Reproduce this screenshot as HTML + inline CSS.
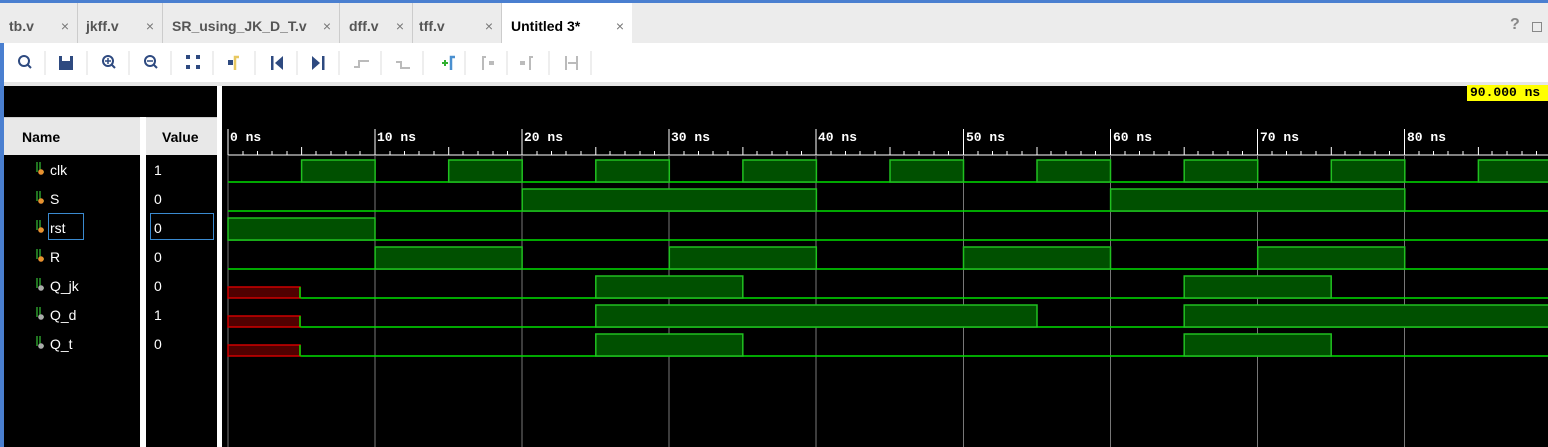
<!DOCTYPE html>
<html><head><style>
body{margin:0;width:1548px;height:447px;overflow:hidden;background:#000;font-family:"Liberation Sans",sans-serif;position:relative}
.a{position:absolute}
.tab{position:absolute;top:3px;height:40px;line-height:46px;font-size:14px;color:#555;font-weight:bold;border-right:1px solid #ccc;box-sizing:border-box;padding-left:9px}
.tab i{position:absolute;right:8px;font-style:normal;font-weight:normal;color:#777;font-size:14px}
.sig{position:absolute;left:36px;color:#fff;font-size:14px}
.val{position:absolute;left:154px;color:#fff;font-size:14px}
</style></head><body>
<div class="a" style="left:0;top:0;width:1548px;height:3px;background:#4a7fd0"></div>
<div class="a" style="left:0;top:3px;width:1548px;height:40px;background:#ececec"></div>
<div class="tab" style="left:0;width:78px">tb.v<i>×</i></div>
<div class="tab" style="left:78px;width:85px;padding-left:8px">jkff.v<i>×</i></div>
<div class="tab" style="left:163px;width:177px">SR_using_JK_D_T.v<i>×</i></div>
<div class="tab" style="left:340px;width:73px">dff.v<i>×</i></div>
<div class="tab" style="left:413px;width:89px;padding-left:6px">tff.v<i>×</i></div>
<div class="tab" style="left:502px;width:130px;background:#fff;color:#000;border:none">Untitled 3*<i>×</i></div>
<div class="a" style="left:1510px;top:16px;color:#888;font-weight:bold;font-size:16px">?</div>
<div class="a" style="left:1532px;top:22px;width:8px;height:8px;border:1.5px solid #888"></div>
<div class="a" style="left:0;top:43px;width:1548px;height:39px;background:#fff"></div>
<div class="a" style="left:0;top:82px;width:1548px;height:4px;background:#e6e6e6"></div>
<svg class="a" style="left:0;top:43px" width="1548" height="39">
<g stroke="#ddd"><line x1="45" y1="8" x2="45" y2="32"/><line x1="87" y1="8" x2="87" y2="32"/><line x1="129" y1="8" x2="129" y2="32"/><line x1="171" y1="8" x2="171" y2="32"/><line x1="213" y1="8" x2="213" y2="32"/><line x1="255" y1="8" x2="255" y2="32"/><line x1="297" y1="8" x2="297" y2="32"/><line x1="339" y1="8" x2="339" y2="32"/><line x1="381" y1="8" x2="381" y2="32"/><line x1="423" y1="8" x2="423" y2="32"/><line x1="465" y1="8" x2="465" y2="32"/><line x1="507" y1="8" x2="507" y2="32"/><line x1="549" y1="8" x2="549" y2="32"/><line x1="591" y1="8" x2="591" y2="32"/></g>
<g fill="none" stroke="#2e4a80" stroke-width="2"><circle cx="24" cy="18" r="5"/><line x1="28" y1="22" x2="31" y2="25"/><circle cx="108" cy="18" r="5"/><line x1="112" y1="22" x2="115" y2="25"/><circle cx="150" cy="18" r="5"/><line x1="154" y1="22" x2="157" y2="25"/><line x1="105" y1="18" x2="111" y2="18" stroke-width="1.5"/><line x1="108" y1="15" x2="108" y2="21" stroke-width="1.5"/><line x1="147" y1="18" x2="153" y2="18" stroke-width="1.5"/></g>
<rect x="59" y="13" width="14" height="14" fill="#2e4a80"/><rect x="62" y="13" width="8" height="5" fill="#fff"/>
<g fill="#2e4a80"><rect x="186" y="12" width="4" height="4"/><rect x="196" y="12" width="4" height="4"/><rect x="186" y="22" width="4" height="4"/><rect x="196" y="22" width="4" height="4"/><rect x="271" y="13" width="2.5" height="14"/><polygon points="283,13 283,27 275,20"/><rect x="322" y="13" width="2.5" height="14"/><polygon points="312,13 312,27 320,20"/></g>
<rect x="228" y="17" width="5" height="5" fill="#2e4a80"/><path d="M235 27V14h4" stroke="#e8c860" stroke-width="2.5" fill="none"/>
<g stroke="#bbb" stroke-width="2" fill="none"><path d="M354 24h5v-6h10"/><path d="M396 19h5v6h9"/><path d="M483 27V14h3"/><path d="M530 27V14h3"/><path d="M566 13v14M577 13v14M568 20h8"/></g>
<path d="M442 20h6M445 17v6" stroke="#30b030" stroke-width="2"/><path d="M451 27V14h4" stroke="#4a90d0" stroke-width="2.5" fill="none"/>
<rect x="489" y="18" width="5" height="4" fill="#bbb"/><rect x="520" y="18" width="5" height="4" fill="#bbb"/>
</svg>
<div class="a" style="left:0;top:43px;width:4px;height:404px;background:#4a7fd0"></div>
<div class="a" style="left:140px;top:117px;width:6px;height:330px;background:#fff"></div>
<div class="a" style="left:217px;top:86px;width:5px;height:361px;background:#fff"></div>
<div class="a" style="left:4px;top:117px;width:136px;height:37px;background:#e8e8e8;border-top:1px solid #ccc"></div>
<div class="a" style="left:146px;top:117px;width:71px;height:37px;background:#e8e8e8;border-top:1px solid #ccc"></div>
<div class="a" style="left:22px;top:129px;font-weight:bold;font-size:14px">Name</div>
<div class="a" style="left:162px;top:129px;font-weight:bold;font-size:14px">Value</div>
<svg class="a" style="left:0;top:155px" width="146" height="200">
<g stroke="#2a9a2a" stroke-width="1.5" fill="none"><path d="M37 7v10M40 7v10h4"/><path d="M37 7v10M40 7v10h4" transform="translate(0,29)"/><path d="M37 7v10M40 7v10h4" transform="translate(0,58)"/><path d="M37 7v10M40 7v10h4" transform="translate(0,87)"/><path d="M37 7v10M40 7v10h4" transform="translate(0,116)"/><path d="M37 7v10M40 7v10h4" transform="translate(0,145)"/><path d="M37 7v10M40 7v10h4" transform="translate(0,174)"/></g>
<g fill="#e89030"><circle cx="41" cy="17" r="2.8"/><circle cx="41" cy="46" r="2.8"/><circle cx="41" cy="75" r="2.8"/><circle cx="41" cy="104" r="2.8"/></g>
<g fill="#aaa"><circle cx="41" cy="133" r="2.8"/><circle cx="41" cy="162" r="2.8"/><circle cx="41" cy="191" r="2.8"/></g>
</svg>
<div class="sig" style="left:50px;top:162px">clk</div><div class="val" style="top:162px">1</div>
<div class="sig" style="left:50px;top:191px">S</div><div class="val" style="top:191px">0</div>
<div class="a" style="left:48px;top:213px;width:36px;height:27px;border:1px solid #3a8ad0;box-sizing:border-box"></div>
<div class="sig" style="left:50px;top:220px">rst</div>
<div class="a" style="left:150px;top:213px;width:64px;height:27px;border:1px solid #3a8ad0;box-sizing:border-box"></div><div class="val" style="top:220px">0</div>
<div class="sig" style="left:50px;top:249px">R</div><div class="val" style="top:249px">0</div>
<div class="sig" style="left:50px;top:278px">Q_jk</div><div class="val" style="top:278px">0</div>
<div class="sig" style="left:50px;top:307px">Q_d</div><div class="val" style="top:307px">1</div>
<div class="sig" style="left:50px;top:336px">Q_t</div><div class="val" style="top:336px">0</div>
<div class="a" style="left:1467px;top:85px;width:81px;height:16px;background:#ffff00;font-family:'Liberation Mono',monospace;font-weight:bold;font-size:13px;line-height:16px;padding-left:3px">90.000 ns</div>
<svg class="a" style="left:222px;top:86px" width="1326" height="361" font-family="Liberation Mono,monospace" font-weight="bold" font-size="13" fill="#fff">
<g transform="translate(-222,-86)">
<line x1="228" y1="155" x2="1548" y2="155" stroke="#fff"/>
<g stroke="#777">
<line x1="228" y1="155" x2="228" y2="447"/><line x1="375" y1="155" x2="375" y2="447"/><line x1="522" y1="155" x2="522" y2="447"/><line x1="669" y1="155" x2="669" y2="447"/><line x1="816" y1="155" x2="816" y2="447"/><line x1="963.5" y1="155" x2="963.5" y2="447"/><line x1="1110.5" y1="155" x2="1110.5" y2="447"/><line x1="1257.5" y1="155" x2="1257.5" y2="447"/><line x1="1404.5" y1="155" x2="1404.5" y2="447"/>
</g>
<g stroke="#fff">
<line x1="228" y1="129" x2="228" y2="155"/><line x1="375" y1="129" x2="375" y2="155"/><line x1="522" y1="129" x2="522" y2="155"/><line x1="669" y1="129" x2="669" y2="155"/><line x1="816" y1="129" x2="816" y2="155"/><line x1="963.5" y1="129" x2="963.5" y2="155"/><line x1="1110.5" y1="129" x2="1110.5" y2="155"/><line x1="1257.5" y1="129" x2="1257.5" y2="155"/><line x1="1404.5" y1="129" x2="1404.5" y2="155"/>
</g>
<text x="230" y="141">0 ns</text><text x="377" y="141">10 ns</text><text x="524" y="141">20 ns</text><text x="671" y="141">30 ns</text><text x="818" y="141">40 ns</text><text x="966" y="141">50 ns</text><text x="1113" y="141">60 ns</text><text x="1260" y="141">70 ns</text><text x="1407" y="141">80 ns</text>
<path stroke="#fff" d="M243 151v4M257.5 151v4M272 151v4M287 151v4M301.6 147v8M316 151v4M331 151v4M346 151v4M360 151v4M390 151v4M404.5 151v4M419 151v4M434 151v4M448.7 147v8M463 151v4M478 151v4M493 151v4M507.5 151v4M537 151v4M551.5 151v4M566 151v4M581 151v4M595.8 147v8M610 151v4M625 151v4M640 151v4M654.5 151v4M684 151v4M698.5 151v4M713 151v4M728 151v4M742.9 147v8M757 151v4M772 151v4M787 151v4M801.5 151v4M831 151v4M845.5 151v4M860 151v4M875 151v4M890 147v8M904 151v4M919 151v4M934 151v4M948.5 151v4M978 151v4M992.5 151v4M1007 151v4M1022 151v4M1037 147v8M1051 151v4M1066 151v4M1081 151v4M1095.5 151v4M1125 151v4M1139.5 151v4M1154 151v4M1169 151v4M1184.2 147v8M1198 151v4M1213 151v4M1228 151v4M1242.5 151v4M1272 151v4M1286.5 151v4M1301 151v4M1316 151v4M1331.3 147v8M1345 151v4M1360 151v4M1375 151v4M1389.5 151v4M1419 151v4M1433.5 151v4M1448 151v4M1463 151v4M1478.4 147v8M1492 151v4M1507 151v4M1522 151v4M1536.5 151v4"/>
<g stroke="#00e000" stroke-width="1.5">
<line x1="228" y1="182" x2="1548" y2="182"/><line x1="228" y1="211" x2="1548" y2="211"/><line x1="228" y1="240" x2="1548" y2="240"/><line x1="228" y1="269" x2="1548" y2="269"/><line x1="300" y1="298" x2="1548" y2="298"/><line x1="300" y1="327" x2="1548" y2="327"/><line x1="300" y1="356" x2="1548" y2="356"/>
</g>
<g fill="#005000" stroke="#20c020" stroke-width="1.5">
<rect x="301.6" y="160" width="73.5" height="22"/><rect x="448.7" y="160" width="73.5" height="22"/><rect x="595.8" y="160" width="73.5" height="22"/><rect x="742.9" y="160" width="73.5" height="22"/><rect x="890" y="160" width="73.5" height="22"/><rect x="1037" y="160" width="73.5" height="22"/><rect x="1184.2" y="160" width="73.5" height="22"/><rect x="1331.3" y="160" width="73.5" height="22"/><rect x="1478.4" y="160" width="80" height="22"/>
<rect x="522.2" y="189" width="294.2" height="22"/><rect x="1110.6" y="189" width="294.2" height="22"/>
<rect x="228" y="218" width="147" height="22"/>
<rect x="375.1" y="247" width="147" height="22"/><rect x="669.3" y="247" width="147" height="22"/><rect x="963.5" y="247" width="147" height="22"/><rect x="1257.7" y="247" width="147" height="22"/>
<rect x="595.8" y="276" width="147" height="22"/><rect x="1184.2" y="276" width="147" height="22"/>
<rect x="595.8" y="305" width="441.2" height="22"/><rect x="1184.2" y="305" width="380" height="22"/>
<rect x="595.8" y="334" width="147" height="22"/><rect x="1184.2" y="334" width="147" height="22"/>
</g>
<g fill="#500000" stroke="#d00000" stroke-width="1.5">
<rect x="228" y="287" width="72" height="11"/><rect x="228" y="316" width="72" height="11"/><rect x="228" y="345" width="72" height="11"/>
</g>
<g stroke="#00e000" stroke-width="1.5"><line x1="300" y1="287" x2="300" y2="298"/><line x1="300" y1="316" x2="300" y2="327"/><line x1="300" y1="345" x2="300" y2="356"/></g>
</g>
</svg>
</body></html>
